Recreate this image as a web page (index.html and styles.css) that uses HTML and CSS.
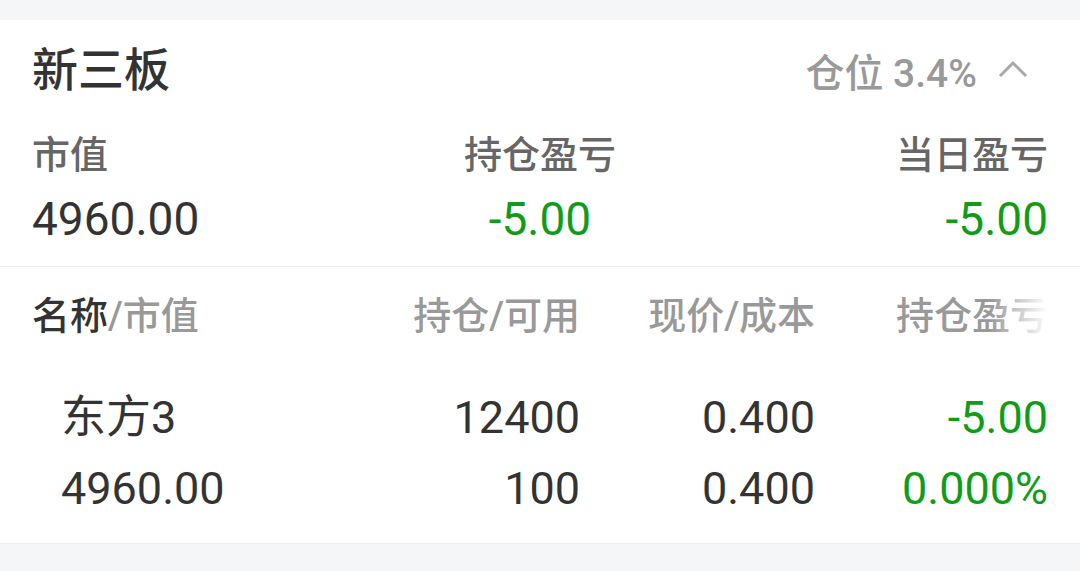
FILE: index.html
```html
<!DOCTYPE html>
<html lang="zh-CN">
<head>
<meta charset="utf-8">
<title>新三板</title>
<link rel="stylesheet" href="styles.css">
</head>
<body>
<section class="card">
  <header class="head">
    <h1 class="title">新三板</h1>
    <div class="ratio">
      <span>仓位 3.4%</span>
      <svg class="chev" width="30" height="18" viewBox="0 0 30 18"><polyline points="2,16 15,3 28,16" fill="none" stroke="#a8a8a8" stroke-width="3"/></svg>
    </div>
  </header>
  <div class="summary">
    <div class="s-col left">
      <div class="s-label">市值</div>
      <div class="s-val">4960.00</div>
    </div>
    <div class="s-col center">
      <div class="s-label">持仓盈亏</div>
      <div class="s-val green">-5.00</div>
    </div>
    <div class="s-col right">
      <div class="s-label">当日盈亏</div>
      <div class="s-val green">-5.00</div>
    </div>
  </div>
  <div class="table">
    <div class="thead">
      <div class="th first"><span class="dark">名称</span>/市值</div>
      <div class="th num">持仓/可用</div>
      <div class="th num">现价/成本</div>
      <div class="th num">持仓盈亏</div>
      <div class="fade"></div>
    </div>
    <div class="trow">
      <div class="td first">东方3</div>
      <div class="td num">12400</div>
      <div class="td num">0.400</div>
      <div class="td num green">-5.00</div>
    </div>
    <div class="trow second">
      <div class="td first">4960.00</div>
      <div class="td num">100</div>
      <div class="td num">0.400</div>
      <div class="td num green">0.000%</div>
    </div>
  </div>
</section>
</body>
</html>
```
FILE: styles.css
```css
* { box-sizing: border-box; }
html, body { margin: 0; padding: 0; }
body {
  background: #f5f6f8;
  font-family: Roboto, "Noto Sans CJK SC", sans-serif;
  font-weight: 400;
  color: #333;
  width: 1080px;
  height: 571px;
  overflow: hidden;
}
.card {
  margin-top: 20px;
  background: #fff;
  height: 524px;
  border-bottom: 1px solid #ececec;
}
.head {
  height: 100px;
  display: flex;
  align-items: center;
  justify-content: space-between;
  padding: 0 52px 0 32px;
}
.title {
  margin: 0;
  font-size: 46px;
  font-weight: 500;
  color: #333;
  line-height: 1;
}
.ratio {
  display: flex;
  align-items: center;
  gap: 21px;
  font-size: 39px;
  font-weight: 500;
  color: #999;
}
.chev { display: block; margin-top: -2px; }
.summary {
  display: grid;
  grid-template-columns: 1fr 1fr 1fr;
  padding: 11px 32px 19px;
  border-bottom: 1px solid #eeeeee;
}
.s-col { display: flex; flex-direction: column; gap: 12px; }
.s-col.left { align-items: flex-start; }
.s-col.center { align-items: center; }
.s-col.right { align-items: flex-end; }
.s-label { font-size: 38px; line-height: 48px; color: #666; font-weight: 500; }
.s-val { font-size: 46px; line-height: 56px; color: #333; }
.green { color: #109c17; }
.table { padding: 0 32px; }
.thead, .trow {
  display: grid;
  grid-template-columns: 300px 248px 235px 233px;
  align-items: center;
}
.thead {
  position: relative;
  padding-top: 25px;
  height: 98px;
  align-items: start;
}
.th { font-size: 38px; line-height: 48px; color: #999; font-weight: 500; }
.th .dark { color: #333; }
.num { text-align: right; }
.fade {
  position: absolute;
  right: -32px;
  top: 0;
  width: 90px;
  height: 100%;
  background: linear-gradient(to right, rgba(255,255,255,0) 0%, #fff 65%);
}
.trow { height: 60px; margin-top: 23px; }
.trow.second { margin-top: 11px; }
.td { font-size: 45px; line-height: 60px; color: #333; }
.td.first { padding-left: 29px; }
.td.green { color: #109c17; }
```
